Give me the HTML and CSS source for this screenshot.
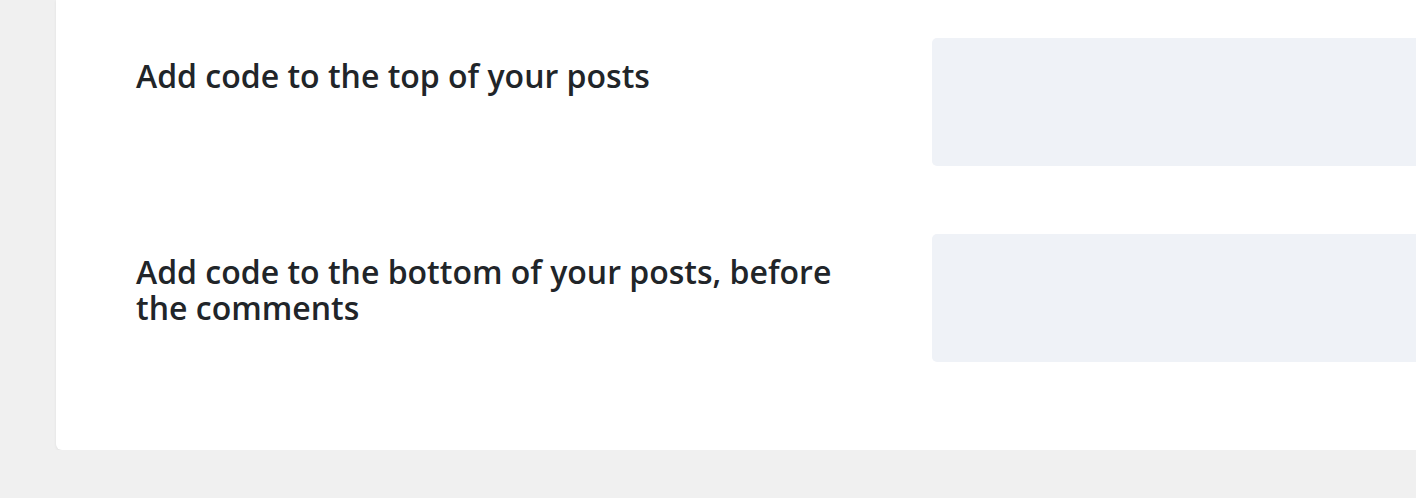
FILE: index.html
```html
<!DOCTYPE html>
<html lang="en">
<head>
    <meta charset="utf-8" />
    <meta name="viewport" content="width=device-width, initial-scale=1" />
    <title>Code Injection</title>
    <link rel="stylesheet" href="styles.css">
</head>
<body>
    <div class="card">
        <div class="field">
            <label class="field-label" for="top-code">Add code to the top of your posts</label>
            <textarea class="code-box" id="top-code"></textarea>
        </div>
        <div class="field">
            <label class="field-label" for="bottom-code">Add code to the bottom of your posts, before the comments</label>
            <textarea class="code-box" id="bottom-code"></textarea>
        </div>
    </div>
</body>
</html>
```

FILE: styles.css
```css
body {
    margin: 0;
    background: #f0f0f0;
    font-family: "Open Sans", "Noto Sans", Arial, sans-serif;
    overflow: hidden;
}
.card {
    margin-left: 56px;
    width: 1500px;
    background: #fff;
    border-radius: 0 0 6px 6px;
    box-shadow: 0 1px 3px rgba(0, 0, 0, 0.07);
    padding: 38px 0 88px 80px;
    box-sizing: border-box;
    display: flex;
    flex-direction: column;
    gap: 68px;
}
.field {
    display: grid;
    grid-template-columns: 736px 1fr;
    column-gap: 60px;
}
.field-label {
    font-size: 32px;
    font-weight: 600;
    line-height: 36px;
    color: #212529;
    padding-top: 20px;
}
.code-box {
    height: 128px;
    border: none;
    border-radius: 5px;
    background: #eff2f7;
    resize: none;
    display: block;
    width: 100%;
    box-sizing: border-box;
}
```
